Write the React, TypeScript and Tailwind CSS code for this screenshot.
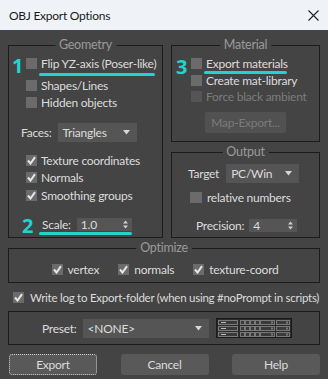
import React from "react";

const font = { fontFamily: 'Lato, "Noto Sans", sans-serif', letterSpacing: "-0.25px" };

function Check({ on, disabled }: { on?: boolean; disabled?: boolean }) {
  return (
    <span
      className={`flex h-[11px] w-[11px] shrink-0 items-center justify-center ${disabled ? "bg-[#555555]" : "bg-[#6b6b6b]"}`}
    >
      {on && (
        <svg width="9" height="9" viewBox="0 0 9 9">
          <path d="M1 4.5 L3.5 7.5 L8 1.2" fill="none" stroke="#e6e6e6" strokeWidth="2" />
        </svg>
      )}
    </span>
  );
}

function Row({ on, label, disabled, h = "h-[17px]" }: { on?: boolean; label: string; disabled?: boolean; h?: string }) {
  return (
    <div className={`flex ${h} items-center gap-[4px] whitespace-nowrap`}>
      <Check on={on} disabled={disabled} />
      <span className={disabled ? "text-[#7c7c7c]" : "text-[#dcdcdc]"}>{label}</span>
    </div>
  );
}

function Group({ title, className, children }: { title: string; className: string; children: React.ReactNode }) {
  return (
    <div className={`relative border border-[#1c1c1c] ${className}`}>
      <span className="absolute -top-[9px] left-1/2 -translate-x-1/2 bg-[#444444] px-[4px] text-[12.5px] leading-[16px] text-[#9a9a9a]">
        {title}
      </span>
      {children}
    </div>
  );
}

function Dropdown({ value, w }: { value: string; w: string }) {
  return (
    <div className={`flex h-[19px] ${w} items-center justify-between bg-[#555555] pl-[5px] pr-[7px] text-[#dcdcdc]`}>
      <span>{value}</span>
      <svg width="7" height="5" viewBox="0 0 7 5">
        <path d="M0 0 H7 L3.5 4.5 Z" fill="#d8d8d8" />
      </svg>
    </div>
  );
}

function Spinner({ value, w }: { value: string; w: string }) {
  return (
    <div className={`flex h-[13px] ${w} items-center justify-between bg-[#555555] pl-[4px] pr-[4px] text-[#dcdcdc]`}>
      <span className="leading-[13px]">{value}</span>
      <svg width="5" height="9" viewBox="0 0 5 9">
        <path d="M0 3.5 L2.5 0.5 L5 3.5 Z M0 5.5 L2.5 8.5 L5 5.5 Z" fill="#d0d0d0" />
      </svg>
    </div>
  );
}

function PresetIcon() {
  const rows = [0, 1, 2];
  return (
    <svg width="76" height="20" viewBox="0 0 76 20">
      <rect x="0.5" y="0.5" width="75" height="19" fill="#2a2a2a" stroke="#1a1a1a" />
      {rows.map((r) => {
        const y = 2 + r * 6;
        return (
          <g key={r}>
            <rect x="2.5" y={y + 0.5} width="19" height="4" fill="#3a3a3a" stroke="#7a7a7a" strokeWidth="1" />
            <line x1="5" y1={y + 2.5} x2="10" y2={y + 2.5} stroke="#bdbdbd" />
            {[24, 29, 34, 39].map((x) => (
              <rect key={x} x={x + 0.5} y={y + 0.5} width="4" height="4" fill="#3a3a3a" stroke="#7a7a7a" />
            ))}
            <rect x="44.5" y={y + 0.5} width="14" height="4" fill="#3a3a3a" stroke="#7a7a7a" />
            <line x1="56" y1={y + 1.5} x2="56" y2={y + 3.5} stroke="#bdbdbd" />
            <rect x="60.5" y={y + 0.5} width="13" height="4" fill="#3a3a3a" stroke="#7a7a7a" />
            <line x1="71" y1={y + 1.5} x2="71" y2={y + 3.5} stroke="#bdbdbd" />
          </g>
        );
      })}
    </svg>
  );
}

function Mark({ n, className }: { n: string; className: string }) {
  return (
    <span
      className={`absolute text-[20px] font-bold leading-[20px] text-[#22d3d0] ${className}`}
      style={{ fontFamily: '"Noto Sans", sans-serif' }}
    >
      {n}
    </span>
  );
}

function Line({ className }: { className: string }) {
  return <span className={`absolute h-[3px] rounded-full bg-[#22d3d0] ${className}`} />;
}

export default function App() {
  return (
    <div className="relative h-[379px] w-[328px] overflow-hidden bg-[#444444] text-[12px] leading-[17px]" style={font}>
      <div className="flex h-[30px] items-center justify-between bg-[#eff3f8] pl-[9px] pr-[9px] text-[#1a1a1a]">
        <span className="text-[12px]">OBJ Export Options</span>
        <svg width="11" height="11" viewBox="0 0 11 11">
          <path d="M0.5 0.5 L10.5 10.5 M10.5 0.5 L0.5 10.5" stroke="#222" strokeWidth="1.1" />
        </svg>
      </div>

      <div className="flex flex-col px-[8px] pt-[15px]">
        <div className="flex gap-[8px]">
          <Group title="Geometry" className="h-[193px] w-[155px] pl-[17px] pt-[9px]">
            <Row label="Flip YZ-axis (Poser-like)" />
            <div className="mt-[5px]">
              <Row label="Shapes/Lines" />
            </div>
            <Row label="Hidden objects" />
            <div className="-ml-[5px] mt-[12px] flex items-center gap-[6px]">
              <span className="text-[#dcdcdc]">Faces:</span>
              <Dropdown value="Triangles" w="w-[79px]" />
            </div>
            <div className="mt-[10px]">
              <Row on label="Texture coordinates" />
              <Row on label="Normals" />
              <Row on label="Smoothing groups" h="h-[18px]" />
            </div>
            <div className="ml-[16px] mt-[12px] flex items-center gap-[6px]">
              <span className="text-[#dcdcdc]">Scale:</span>
              <Spinner value="1.0" w="w-[55px]" />
            </div>
          </Group>

          <div className="flex w-[149px] flex-col">
            <Group title="Material" className="flex h-[97px] flex-col pl-[19px] pt-[9px]">
              <Row label="Export materials" />
              <Row label="Create mat-library" h="h-[16px]" />
              <Row label="Force black ambient" disabled />
              <div className="-ml-[19px] mt-[7px] flex justify-center">
                <div className="flex h-[21px] w-[81px] items-center justify-center rounded-[2px] bg-[#515151] text-[#7c7c7c]">
                  Map-Export...
                </div>
              </div>
            </Group>

            <Group title="Output" className="mt-[10px] h-[86px] pl-[16px] pt-[11px]">
              <div className="flex items-center gap-[7px]">
                <span className="text-[#dcdcdc]">Target</span>
                <Dropdown value="PC/Win" w="w-[73px]" />
              </div>
              <div className="ml-[2px] mt-[6px] flex h-[17px] items-center gap-[5px]">
                <span className="flex h-[11px] w-[12px] bg-[#6b6b6b]" />
                <span className="text-[#dcdcdc]">relative numbers</span>
              </div>
              <div className="ml-[8px] mt-[11px] flex items-center gap-[5px]">
                <span className="text-[#dcdcdc]">Precision:</span>
                <Spinner value="4" w="w-[48px]" />
              </div>
            </Group>
          </div>
        </div>

        <Group title="Optimize" className="mt-[10px] flex h-[35px] items-center justify-center gap-[19px] pl-[2px] pt-[8px]">
          <div className="flex items-center gap-[5px]">
            <Check on />
            <span className="text-[#dcdcdc]">vertex</span>
          </div>
          <div className="flex items-center gap-[5px]">
            <Check on />
            <span className="text-[#dcdcdc]">normals</span>
          </div>
          <div className="flex items-center gap-[5px]">
            <Check on />
            <span className="text-[#dcdcdc]">texture-coord</span>
          </div>
        </Group>

        <div className="ml-[5px] mt-[6px] flex h-[17px] items-center gap-[6px] whitespace-nowrap">
          <Check on />
          <span className="text-[11.5px] tracking-[-0.25px] text-[#dcdcdc]">
            Write log to Export-folder (when using #noPrompt in scripts)
          </span>
        </div>

        <div className="mt-[5px] flex h-[34px] items-center border border-[#1c1c1c] pl-[33px]">
          <span className="text-[#dcdcdc]">Preset:</span>
          <div className="ml-[6px]">
            <Dropdown value="<NONE>" w="w-[126px]" />
          </div>
          <div className="ml-[7px]">
            <PresetIcon />
          </div>
        </div>

        <div className="ml-[1px] mt-[9px] flex justify-between">
          <div className="flex h-[21px] w-[88px] items-center justify-center rounded-[3px] border border-dotted border-[#cfcfcf] bg-[#595959] text-[#dcdcdc]">
            Export
          </div>
          <div className="flex h-[21px] w-[88px] items-center justify-center rounded-[3px] bg-[#595959] text-[#dcdcdc]">
            Cancel
          </div>
          <div className="flex h-[21px] w-[88px] items-center justify-center rounded-[3px] bg-[#595959] text-[#dcdcdc]">
            Help
          </div>
        </div>
      </div>

      <Mark n="1" className="left-[12px] top-[56px]" />
      <Mark n="2" className="left-[22px] top-[216px]" />
      <Mark n="3" className="left-[176px] top-[57px]" />
      <Line className="left-[39px] top-[73px] w-[116px]" />
      <Line className="left-[39px] top-[232px] w-[93px]" />
      <Line className="left-[204px] top-[71px] w-[83px]" />
    </div>
  );
}
